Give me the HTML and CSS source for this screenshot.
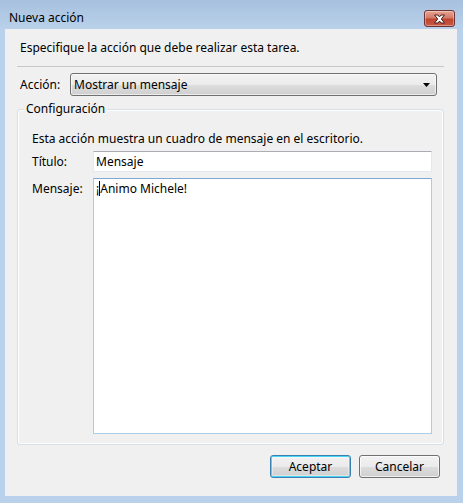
FILE: index.html
```html
<!DOCTYPE html>
<html lang="es">
<head>
<meta charset="utf-8">
<title>Nueva acción</title>
<link rel="stylesheet" href="styles.css">
</head>
<body>
<div class="window">
  <div class="titlebar">
    <span class="title">Nueva acción</span>
    <button class="close" aria-label="Cerrar">
      <svg width="13" height="10" viewBox="0 0 13 10"><path d="M1.5 1 L5 1 L6.5 3 L8 1 L11.5 1 L8.3 5 L11.5 9 L8 9 L6.5 7 L5 9 L1.5 9 L4.7 5 Z" fill="#fff" stroke="#4a2020" stroke-width="1" stroke-linejoin="round"/></svg>
    </button>
  </div>
  <div class="client">
    <p class="intro">Especifique la acción que debe realizar esta tarea.</p>
    <div class="sep"></div>
    <div class="action-row">
      <span class="label action-label">Acción:</span>
      <div class="combo">
        <span>Mostrar un mensaje</span>
        <svg width="7" height="4" viewBox="0 0 7 4"><path d="M0 0 H7 L3.5 4 Z" fill="#000"/></svg>
      </div>
    </div>
    <div class="group">
      <span class="legend">Configuración</span>
      <p class="desc">Esta acción muestra un cuadro de mensaje en el escritorio.</p>
      <div class="field">
        <span class="label">Título:</span>
        <div class="input">Mensaje</div>
      </div>
      <div class="field field-grow">
        <span class="label">Mensaje:</span>
        <div class="textarea">¡<span class="caret"></span>Animo Michele!</div>
      </div>
    </div>
    <div class="buttons">
      <button class="btn btn-default">Aceptar</button>
      <button class="btn">Cancelar</button>
    </div>
  </div>
</div>
</body>
</html>
```

FILE: styles.css
```css
* { box-sizing: border-box; }
html, body { margin: 0; padding: 0; }
body {
  width: 463px;
  height: 503px;
  font-family: "Noto Sans", "Open Sans", sans-serif;
  font-size: 12px;
  color: #000;
  background: #b9d1ea;
  overflow: hidden;
}
.window {
  height: 503px;
  display: flex;
  flex-direction: column;
  background: linear-gradient(to bottom, #a7c0dd 0px, #b9d1ea 29px, #b9d1ea 100%);
  padding: 0 6px 7px 5px;
}
.titlebar {
  height: 29px;
  display: flex;
  align-items: flex-start;
  justify-content: space-between;
  flex-shrink: 0;
}
.title {
  margin: 10px 0 0 4px;
  line-height: 16px;
  color: #000;
}
.close {
  margin: 10px 2px 0 0;
  width: 31px;
  height: 17px;
  padding: 0;
  border: 1px solid #6e3434;
  border-radius: 3px;
  background: linear-gradient(to bottom, #e8a493 0%, #d27b6a 45%, #c0432f 55%, #c75a47 100%);
  box-shadow: inset 0 0 0 1px rgba(255,255,255,0.35);
  display: flex;
  align-items: center;
  justify-content: center;
}
.client {
  flex: 1;
  background: #f0f0f0;
  display: flex;
  flex-direction: column;
  padding: 11px 13px 0 12px;
}
.intro {
  margin: 0 0 0 3px;
  line-height: 16px;
}
.sep {
  margin-top: 10px;
  height: 1px;
  background: #c8c8c8;
  flex-shrink: 0;
}
.action-row {
  margin-top: 6px;
  display: flex;
  align-items: center;
  height: 23px;
}
.label {
  line-height: 16px;
}
.action-label {
  margin-left: 3px;
  width: 50px;
}
.combo {
  flex: 1;
  margin-right: 7px;
  height: 23px;
  border: 1px solid #707070;
  border-radius: 3px;
  background: linear-gradient(to bottom, #f2f2f2 0%, #ebebeb 50%, #dddddd 51%, #cfcfcf 100%);
  box-shadow: inset 0 0 0 1px rgba(255,255,255,0.6);
  display: flex;
  align-items: center;
  justify-content: space-between;
  padding: 0 6px 0 3px;
  line-height: 16px;
}
.group {
  margin-top: 13px;
  flex: 1;
  border: 1px solid #d5dfe5;
  border-radius: 3px;
  box-shadow: inset 0 0 0 1px #fff;
  display: flex;
  flex-direction: column;
  padding: 0 11px 10px 14px;
}
.legend {
  align-self: flex-start;
  margin: -9px 0 0 -8px;
  padding: 0 2px;
  background: #f0f0f0;
  line-height: 16px;
}
.desc {
  margin: 14px 0 0 0;
  line-height: 16px;
}
.field {
  display: flex;
  align-items: center;
  margin-top: 4px;
}
.field .label {
  width: 61px;
  flex-shrink: 0;
}
.input {
  flex: 1;
  height: 21px;
  border: 1px solid #e3e9ef;
  border-top-color: #abadb3;
  background: #fff;
  padding: 1px 2px;
  line-height: 17px;
}
.field-grow {
  flex: 1;
  align-items: stretch;
  margin-top: 6px;
}
.field-grow .label {
  padding-top: 3px;
}
.textarea {
  flex: 1;
  border: 1px solid #a9cde4;
  border-top-color: #7fa9d4;
  background: #fff;
  padding: 2px 2px;
  line-height: 16px;
}
.caret {
  display: inline-block;
  width: 1px;
  height: 15px;
  background: #000;
  vertical-align: -3px;
  margin: 0 0 0 0;
}
.buttons {
  display: flex;
  justify-content: flex-end;
  gap: 8px;
  margin: 10px 4px 18px 0;
}
.btn {
  width: 81px;
  height: 23px;
  font-family: inherit;
  font-size: 12px;
  color: #000;
  border: 1px solid #707070;
  border-radius: 3px;
  background: linear-gradient(to bottom, #f2f2f2 0%, #ebebeb 50%, #dddddd 51%, #cfcfcf 100%);
  box-shadow: inset 0 0 0 1px rgba(255,255,255,0.7);
  padding: 0;
}
.btn-default {
  border-color: #3c7fb1;
  box-shadow: inset 0 0 0 1px #48d5f6, inset 0 0 0 2px rgba(255,255,255,0.4);
}
```
